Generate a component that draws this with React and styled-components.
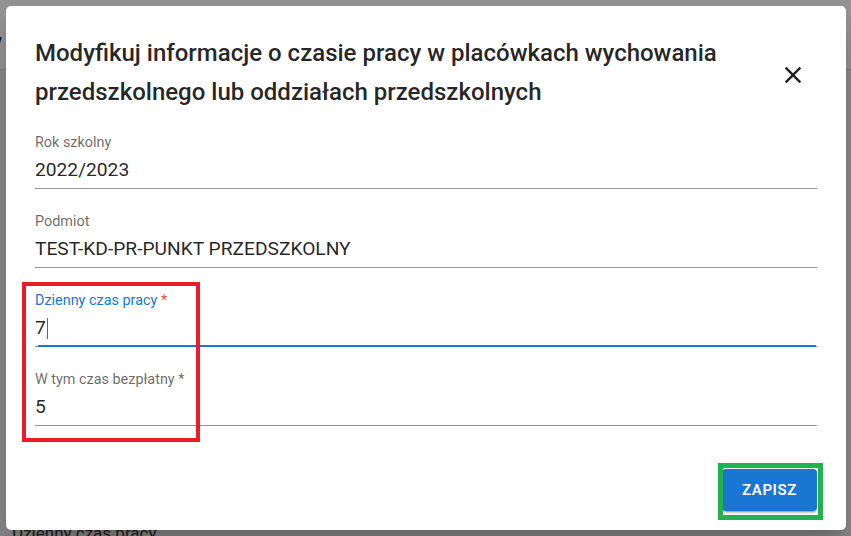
import React from "react";
import styled, { createGlobalStyle } from "styled-components";

const GlobalStyle = createGlobalStyle`
  html, body { margin: 0; padding: 0; }
  body { font-family: Roboto, "Liberation Sans", Arial, sans-serif; }
  * { box-sizing: border-box; }
`;

const Screen = styled.div`
  position: relative;
  width: 851px;
  height: 536px;
  overflow: hidden;
  background: #eeeeee;
`;

const PageHeader = styled.div`
  height: 70px;
  background: #ffffff;
  border-bottom: 1px solid #d6d6d6;
  display: flex;
  align-items: center;
`;

const PageHeaderText = styled.span`
  font-size: 20px;
  color: #111;
  margin-left: -13px;
  margin-top: 12px;
`;

const PageBody = styled.div`
  display: flex;
  flex-direction: column;
  height: 465px;
  justify-content: flex-end;
  padding: 0 0 0 12px;
`;

const PageBodyText = styled.span`
  font-size: 17px;
  color: #333;
  line-height: 20px;
  margin-bottom: -8px;
`;

const Backdrop = styled.div`
  position: absolute;
  inset: 0;
  background: rgba(0, 0, 0, 0.42);
`;

const Dialog = styled.div`
  position: absolute;
  left: 6px;
  top: 6px;
  width: 840px;
  height: 524px;
  background: #ffffff;
  border-radius: 5px;
  box-shadow: 0 11px 15px -7px rgba(0,0,0,0.2), 0 24px 38px 3px rgba(0,0,0,0.14);
  display: flex;
  flex-direction: column;
  padding: 0 29px 19px 29px;
`;

const Header = styled.div`
  display: flex;
  align-items: flex-start;
  padding-top: 28px;
`;

const Title = styled.h2`
  margin: 0;
  width: 735px;
  font-size: 24px;
  font-weight: 500;
  line-height: 39px;
  color: rgba(0, 0, 0, 0.87);
`;

const CloseButton = styled.button`
  margin-left: auto;
  margin-top: 27px;
  margin-right: 10px;
  width: 28px;
  height: 28px;
  padding: 0;
  border: none;
  background: transparent;
  display: flex;
  align-items: center;
  justify-content: center;
  color: #1f1f1f;
  cursor: pointer;
`;

const Fields = styled.div`
  display: flex;
  flex-direction: column;
  gap: 23px;
  padding-top: 21px;
`;

const Field = styled.div`
  position: relative;
  display: flex;
  flex-direction: column;
  padding-bottom: 4px;
  border-bottom: 1px solid rgba(0, 0, 0, 0.42);
  &::after {
    content: "";
    display: ${(p) => (p.$focused ? "block" : "none")};
    position: absolute;
    left: 3px;
    right: 1px;
    bottom: -1px;
    height: 2px;
    background: #1976d2;
  }
`;

const Label = styled.label`
  font-size: 14.4px;
  line-height: 20px;
  color: ${(p) => (p.$focused ? "#1976d2" : "rgba(0, 0, 0, 0.6)")};
`;

const Asterisk = styled.span`
  color: ${(p) => (p.$focused ? "#f4511e" : "rgba(0, 0, 0, 0.6)")};
`;

const Value = styled.div`
  margin-top: 3px;
  font-size: 19.2px;
  line-height: 28px;
  color: rgba(0, 0, 0, 0.87);
  display: flex;
  align-items: center;
`;

const Caret = styled.span`
  display: inline-block;
  width: 1px;
  height: 21px;
  margin-left: 1px;
  background: #1976d2;
`;

const Footer = styled.div`
  margin-top: auto;
  display: flex;
  justify-content: flex-end;
`;

const SaveButton = styled.button`
  width: 95px;
  height: 42px;
  border: none;
  border-radius: 4px;
  background: #1976d2;
  color: #ffffff;
  font-family: Roboto, "Liberation Sans", Arial, sans-serif;
  font-size: 15px;
  font-weight: 600;
  letter-spacing: 0.6px;
  text-transform: uppercase;
  box-shadow: 0 3px 1px -2px rgba(0,0,0,0.2), 0 2px 2px 0 rgba(0,0,0,0.14), 0 1px 5px 0 rgba(0,0,0,0.12);
  cursor: pointer;
`;

const Highlight = styled.div`
  position: absolute;
  left: ${(p) => p.$x}px;
  top: ${(p) => p.$y}px;
  width: ${(p) => p.$w}px;
  height: ${(p) => p.$h}px;
  border: ${(p) => p.$t}px solid ${(p) => p.$color};
  pointer-events: none;
`;

const CloseIcon = () => (
  <svg width="28" height="28" viewBox="0 0 24 24" fill="currentColor">
    <path d="M19 6.41 17.59 5 12 10.59 6.41 5 5 6.41 10.59 12 5 17.59 6.41 19 12 13.41 17.59 19 19 17.59 13.41 12z" />
  </svg>
);

export default function App() {
  return (
    <>
      <GlobalStyle />
      <Screen>
        <PageHeader>
          <PageHeaderText>w</PageHeaderText>
        </PageHeader>
        <PageBody>
          <PageBodyText>Dzienny czas pracy</PageBodyText>
        </PageBody>
        <Backdrop />
        <Dialog>
          <Header>
            <Title>
              Modyfikuj informacje o czasie pracy w placówkach wychowania przedszkolnego lub oddziałach przedszkolnych
            </Title>
            <CloseButton aria-label="Zamknij">
              <CloseIcon />
            </CloseButton>
          </Header>
          <Fields>
            <Field>
              <Label>Rok szkolny</Label>
              <Value>2022/2023</Value>
            </Field>
            <Field>
              <Label>Podmiot</Label>
              <Value>TEST-KD-PR-PUNKT PRZEDSZKOLNY</Value>
            </Field>
            <Field $focused>
              <Label $focused>
                Dzienny czas pracy <Asterisk $focused>*</Asterisk>
              </Label>
              <Value>
                7<Caret />
              </Value>
            </Field>
            <Field>
              <Label>
                W tym czas bezpłatny <Asterisk>*</Asterisk>
              </Label>
              <Value>5</Value>
            </Field>
          </Fields>
          <Footer>
            <SaveButton>Zapisz</SaveButton>
          </Footer>
        </Dialog>
        <Highlight $x={22} $y={282} $w={178} $h={160} $t={4} $color="#ed1c24" />
        <Highlight $x={718} $y={463} $w={105} $h={57} $t={5} $color="#22b14c" />
      </Screen>
    </>
  );
}
